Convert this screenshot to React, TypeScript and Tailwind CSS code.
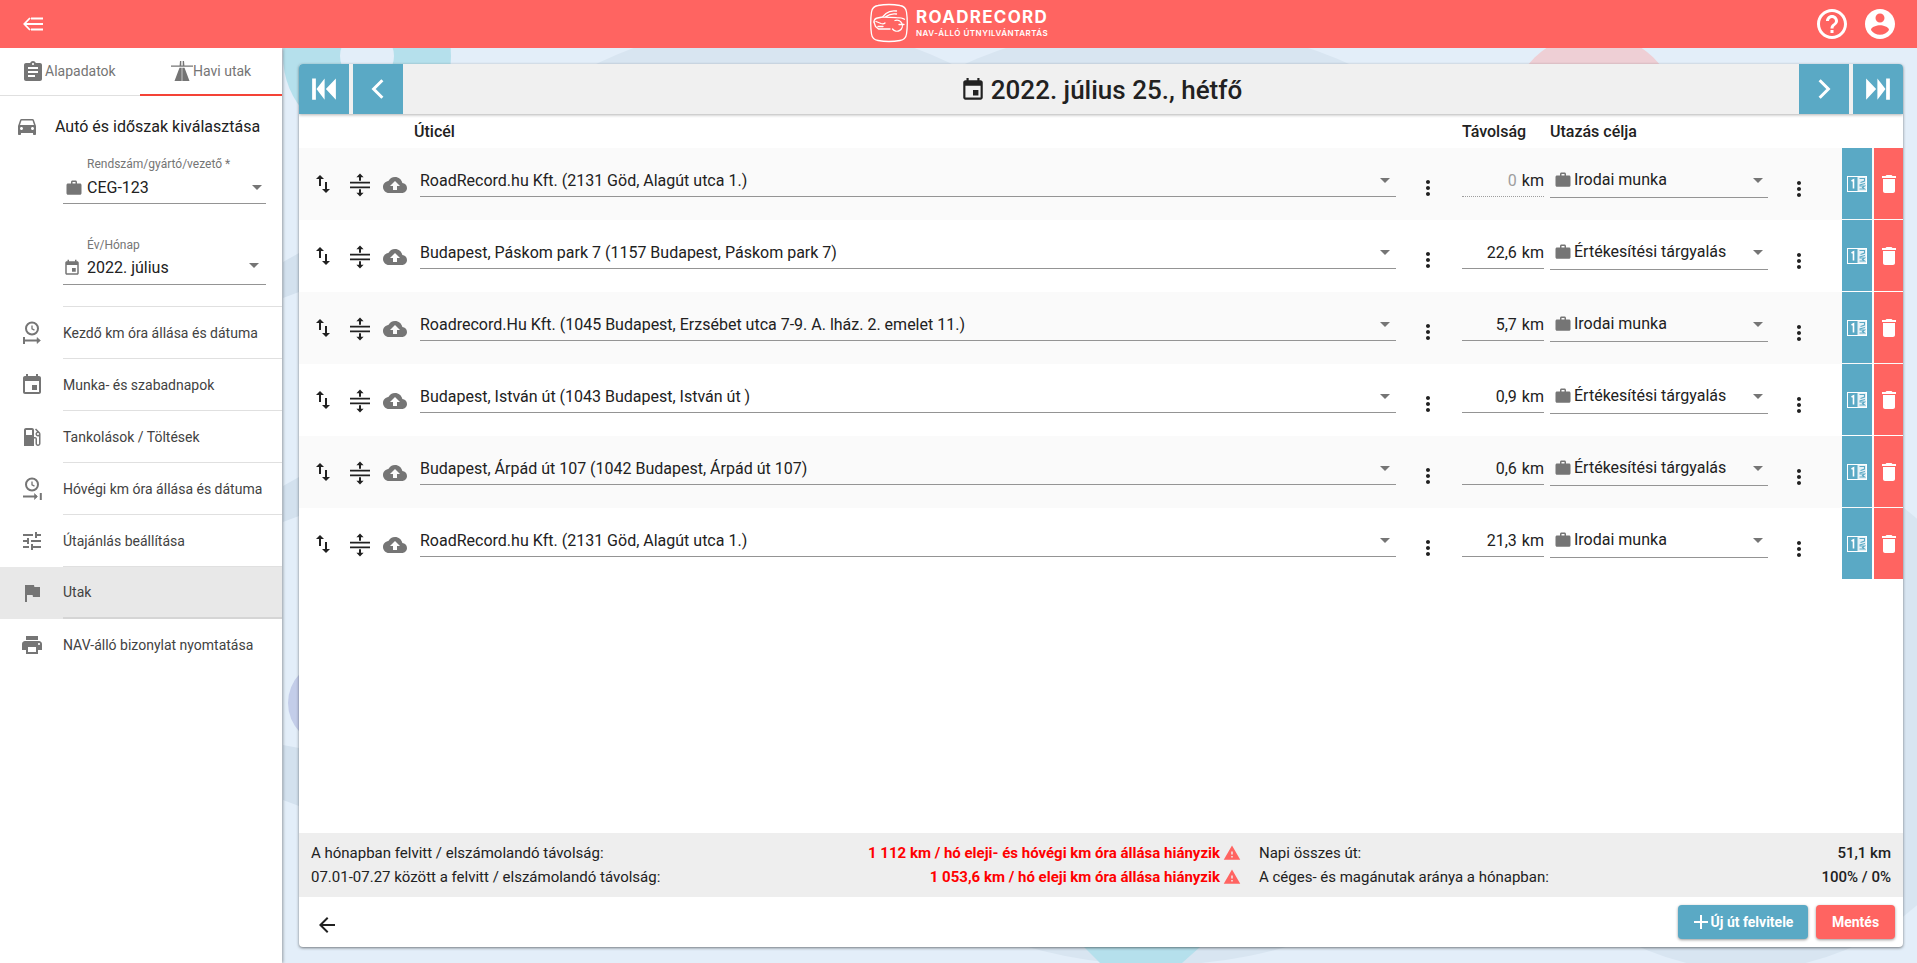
import React from "react";

const P = {
  assignment: "M19 3h-4.18C14.4 1.84 13.3 1 12 1c-1.3 0-2.4.84-2.82 2H5c-1.1 0-2 .9-2 2v14c0 1.1.9 2 2 2h14c1.1 0 2-.9 2-2V5c0-1.1-.9-2-2-2zm-7 0c.55 0 1 .45 1 1s-.45 1-1 1-1-.45-1-1 .45-1 1-1zm2 14H7v-2h7v2zm3-4H7v-2h10v2zm0-4H7V7h10v2z",
  car: "M18.92 6.01C18.72 5.42 18.16 5 17.5 5h-11c-.66 0-1.21.42-1.42 1.01L3 12v8c0 .55.45 1 1 1h1c.55 0 1-.45 1-1v-1h12v1c0 .55.45 1 1 1h1c.55 0 1-.45 1-1v-8l-2.08-5.99zM6.5 16c-.83 0-1.5-.67-1.5-1.5S5.67 13 6.5 13s1.5.67 1.5 1.5S7.33 16 6.5 16zm11 0c-.83 0-1.5-.67-1.5-1.5s.67-1.5 1.5-1.5 1.5.67 1.5 1.5-.67 1.5-1.5 1.5zM5 11l1.5-4.5h11L19 11H5z",
  work: "M20 6h-4V4c0-1.11-.89-2-2-2h-4c-1.11 0-2 .89-2 2v2H4c-1.11 0-1.99.89-1.99 2L2 19c0 1.11.89 2 2 2h16c1.11 0 2-.89 2-2V8c0-1.11-.89-2-2-2zm-6 0h-4V4h4v2z",
  event: "M17 12h-5v5h5v-5zM16 1v2H8V1H6v2H5c-1.11 0-1.99.9-1.99 2L3 19c0 1.1.89 2 2 2h14c1.1 0 2-.9 2-2V5c0-1.1-.9-2-2-2h-1V1h-2zm3 18H5V8h14v11z",
  gas: "M19.77 7.23l.01-.01-3.72-3.72L15 4.56l2.11 2.11c-.94.36-1.61 1.26-1.61 2.33 0 1.38 1.12 2.5 2.5 2.5.36 0 .69-.08 1-.21v7.21c0 .55-.45 1-1 1s-1-.45-1-1V14c0-1.1-.9-2-2-2h-1V5c0-1.1-.9-2-2-2H6c-1.1 0-2 .9-2 2v16h10v-7.5h1.5v5c0 1.38 1.12 2.5 2.5 2.5s2.5-1.12 2.5-2.5V9c0-.69-.28-1.32-.73-1.77zM12 10H6V5h6v5zm6 0c-.55 0-1-.45-1-1s.45-1 1-1 1 .45 1 1-.45 1-1 1z",
  tune: "M3 17v2h6v-2H3zM3 5v2h10V5H3zm10 16v-2h8v-2h-8v-2h-2v6h2zM7 9v2H3v2h4v2h2V9H7zm14 4v-2H11v2h10zm-6-4h2V7h4V5h-4V3h-2v6z",
  flag: "M14.4 6L14 4H5v17h2v-7h5.6l.4 2h7V6z",
  print: "M19 8H5c-1.66 0-3 1.34-3 3v6h4v4h12v-4h4v-6c0-1.66-1.34-3-3-3zm-3 11H8v-5h8v5zm3-7c-.55 0-1-.45-1-1s.45-1 1-1 1 .45 1 1-.45 1-1 1zm-1-9H6v4h12V3z",
  swap: "M16 17.01V10h-2v7.01h-3L15 21l4-3.99h-3zM9 3L5 6.99h3V14h2V6.99h3L9 3z",
  cloud: "M19.35 10.04C18.67 6.59 15.64 4 12 4 9.11 4 6.6 5.64 5.35 8.04 2.34 8.36 0 10.91 0 14c0 3.31 2.69 6 6 6h13c2.76 0 5-2.24 5-5 0-2.64-2.05-4.78-4.65-4.96zM14 13v4h-4v-4H7l5-5 5 5h-3z",
  more: "M12 8c1.1 0 2-.9 2-2s-.9-2-2-2-2 .9-2 2 .9 2 2 2zm0 2c-1.1 0-2 .9-2 2s.9 2 2 2 2-.9 2-2-.9-2-2-2zm0 6c-1.1 0-2 .9-2 2s.9 2 2 2 2-.9 2-2-.9-2-2-2z",
  del: "M6 19c0 1.1.9 2 2 2h8c1.1 0 2-.9 2-2V7H6v12zM19 4h-3.5l-1-1h-5l-1 1H5v2h14V4z",
  warn: "M1 21h22L12 2 1 21zm12-3h-2v-2h2v2zm0-4h-2v-4h2v4z",
  help: "M11 18h2v-2h-2v2zm1-16C6.48 2 2 6.48 2 12s4.48 10 10 10 10-4.48 10-10S17.52 2 12 2zm0 18c-4.41 0-8-3.59-8-8s3.59-8 8-8 8 3.59 8 8-3.59 8-8 8zm0-14c-2.21 0-4 1.79-4 4h2c0-1.1.9-2 2-2s2 .9 2 2c0 2-3 1.75-3 5h2c0-2.25 3-2.5 3-5 0-2.21-1.79-4-4-4z",
  account: "M12 2C6.48 2 2 6.48 2 12s4.48 10 10 10 10-4.48 10-10S17.52 2 12 2zm0 3c1.66 0 3 1.34 3 3s-1.34 3-3 3-3-1.34-3-3 1.34-3 3-3zm0 14.2c-2.5 0-4.71-1.28-6-3.22.03-1.99 4-3.08 6-3.08 1.99 0 5.97 1.09 6 3.08-1.29 1.94-3.5 3.22-6 3.22z",
  back: "M20 11H7.83l5.59-5.59L12 4l-8 8 8 8 1.41-1.41L7.83 13H20v-2z",
  highway: "M1 6.500h22v1.300H1zM10 2h1.300v4.500H9.600zM12.700 2H14l.4 4.500h-1.700zM9.500 8.800h2.200V22H4.500zM12.300 8.800h2.200L19.500 22h-7.200z",
  split: "M2 8.700h20v1.900H2zM2 13.400h20v1.900H2zM12 .5l3.600 3.800h-2.600v3.400h-2V4.300H8.400zM12 23.500l-3.600-3.800h2.600v-3.400h2v3.400h2.600z",
  start: "M2.500 3.500h3v17h-3zM12.500 3.500v17l-6.500-8.500zM21.500 3.500v17l-8-8.500z",
  end: "M21.500 3.500h-3v17h3zM11.500 3.500v17l6.500-8.500zM2.500 3.500v17l8-8.500z",
};

function Icon({ d, className }: { d: string; className: string }) {
  return (
    <svg viewBox="0 0 24 24" className={className} fill="currentColor">
      <path d={d} />
    </svg>
  );
}

function Caret({ className = "" }: { className?: string }) {
  return (
    <svg viewBox="0 0 10 5" className={`w-[10px] h-[5px] shrink-0 ${className}`} fill="#757575">
      <path d="M0 0h10L5 5z" />
    </svg>
  );
}

function ClockIcon({ end }: { end?: boolean }) {
  return (
    <svg viewBox="0 0 20 24" className="w-[20px] h-[24px]" fill="none" stroke="#757575" strokeWidth="2">
      <circle cx="10" cy="7.500" r="6" />
      <path d="M10 4.500v3.300l2.500 1.300" strokeWidth="1.300" />
      {end ? (
        <>
          <path d="M1 19.500h14" />
          <path d="M12.500 16.500l3 3-3 3z" fill="#757575" strokeWidth="0.500" />
          <path d="M18.800 16v7" />
        </>
      ) : (
        <>
          <path d="M2 16v7" />
          <path d="M2 19.500h15" />
          <path d="M15 16.500l3.500 3-3.500 3z" fill="#757575" strokeWidth="0.500" />
        </>
      )}
    </svg>
  );
}

function NumbersIcon() {
  return (
    <svg viewBox="0 0 20 16" className="w-[20px] h-[16px]">
      <rect x="0.500" y="0.500" width="19" height="15" fill="none" stroke="#fff" />
      <rect x="10.500" y="0.500" width="9" height="15" fill="#fff" fillOpacity="0.85" />
      <path d="M4.500 5l2-1.200V12.500" fill="none" stroke="#fff" strokeWidth="1.600" />
      <path d="M12.500 2.500h5v2.500l-4 1.500M18 7.500l-5.500 1.500M12.500 10h5l-2 1.500 2 1.500h-5" fill="none" stroke="#5aa9c5" strokeWidth="1.100" />
    </svg>
  );
}

function Logo() {
  return (
    <svg viewBox="0 0 40 40" className="w-[40px] h-[40px]" fill="none" stroke="#fff" strokeWidth="1.300" strokeLinecap="round" strokeLinejoin="round">
      <path d="M9 2.500C16 1.200 24 1.200 31 2.500c4 .6 6 2.700 6.500 6.500 1 7 1 15 0 22-.5 3.800-2.500 5.900-6.500 6.500-7 1.300-15 1.300-22 0-4-.6-6-2.700-6.500-6.500-1-7-1-15 0-22C3 5.200 5 3.100 9 2.500z" />
      <path d="M5 19c0-2 1-3.500 3.500-4l5-1 3.500-3.500c3-2.500 7-3 10.500-2.500" />
      <path d="M17 13.500c3-2.200 7-3 10.500-2.500M14 14.200l13.500 0.500c3 0 6 .3 8 1.500" />
      <path d="M5 19l1.500 4.500 3 2.500h11.500" />
      <path d="M7 18.500l5 2c1.500.5 3 .5 4-.5M9 23.500h5" />
      <path d="M26 17.500a5.500 5.500 0 1 1-2.500 8.500M30 21.500h5" />
    </svg>
  );
}

const menu: { label: string; icon: React.ReactNode; active?: boolean }[] = [
  { label: "Kezdő km óra állása és dátuma", icon: <ClockIcon /> },
  { label: "Munka- és szabadnapok", icon: <Icon d={P.event} className="w-[24px] h-[24px]" /> },
  { label: "Tankolások / Töltések", icon: <Icon d={P.gas} className="w-[24px] h-[24px]" /> },
  { label: "Hóvégi km óra állása és dátuma", icon: <ClockIcon end /> },
  { label: "Útajánlás beállítása", icon: <Icon d={P.tune} className="w-[24px] h-[24px]" /> },
  { label: "Utak", icon: <Icon d={P.flag} className="w-[24px] h-[24px]" />, active: true },
  { label: "NAV-álló bizonylat nyomtatása", icon: <Icon d={P.print} className="w-[24px] h-[24px]" /> },
];

const rows = [
  { place: "RoadRecord.hu Kft. (2131 Göd, Alagút utca 1.)", km: "0", purpose: "Irodai munka", zero: true },
  { place: "Budapest, Páskom park 7 (1157 Budapest, Páskom park 7)", km: "22,6", purpose: "Értékesítési tárgyalás" },
  { place: "Roadrecord.Hu Kft. (1045 Budapest, Erzsébet utca 7-9. A. lház. 2. emelet 11.)", km: "5,7", purpose: "Irodai munka" },
  { place: "Budapest, István út (1043 Budapest, István út )", km: "0,9", purpose: "Értékesítési tárgyalás" },
  { place: "Budapest, Árpád út 107 (1042 Budapest, Árpád út 107)", km: "0,6", purpose: "Értékesítési tárgyalás" },
  { place: "RoadRecord.hu Kft. (2131 Göd, Alagút utca 1.)", km: "21,3", purpose: "Irodai munka" },
];

function NavButton({ d, chevron }: { d?: string; chevron?: string }) {
  return (
    <div className="w-[50px] h-[50px] bg-[#5aa9c5] flex items-center justify-center text-white shrink-0">
      {d ? (
        <Icon d={d} className="w-[30px] h-[30px]" />
      ) : (
        <svg viewBox="0 0 24 24" className="w-[30px] h-[30px]" fill="none" stroke="#fff" strokeWidth="2.400">
          <path d={chevron} />
        </svg>
      )}
    </div>
  );
}

function Backdrop() {
  return (
    <svg className="absolute inset-0 w-full h-full" viewBox="0 0 1917 963">
      <circle cx="367" cy="56" r="84" fill="#b5e0ec" />
      <circle cx="367" cy="56" r="27" fill="#e3eef9" />
      <circle cx="774" cy="430" r="407" fill="#d8e5f1" />
      <circle cx="1594" cy="117" r="84" fill="#eecfd5" />
      <circle cx="1157" cy="494" r="471" fill="#d8e5f1" />
      <circle cx="1746" cy="712" r="258" fill="#d8e5f1" />
      <path d="M1084 947h116l-18 16h-82z" fill="#b5e0ec" />
      <circle cx="330" cy="703" r="42" fill="#c3cde9" />
      <path d="M283 262L299 253V292L283 298z" fill="#d3e1ee" />
      <path d="M283 486L299 477V516L283 522z" fill="#d3e1ee" />
      <path d="M283 745L299 748V806L283 800z" fill="#d3e1ee" />
    </svg>
  );
}

export default function App() {
  return (
    <div className="relative h-[963px] w-[1917px] overflow-hidden bg-[#e3eef9] text-[#212121] font-['Roboto',sans-serif] flex flex-col">
      <Backdrop />

      <header className="relative z-20 h-[48px] shrink-0 bg-[#ff6461] flex items-center justify-between">
        <div className="w-[66px] flex justify-center">
          <svg viewBox="0 0 20 14" className="w-[20px] h-[14px]" fill="none" stroke="#fff" strokeWidth="1.800">
            <path d="M7 1L1.300 7 7 13M1.500 7H20M8 1.500h12M8 12.500h12" />
          </svg>
        </div>
        <div className="absolute left-[869px] top-[3px] flex items-center gap-[7px]">
          <Logo />
          <div className="text-white font-['Inter',sans-serif] leading-none">
            <div className="text-[17px] font-bold tracking-[1.300px]">ROADRECORD</div>
            <div className="text-[8px] font-semibold mt-[3px] tracking-[0.500px] whitespace-nowrap">NAV-ÁLLÓ ÚTNYILVÁNTARTÁS</div>
          </div>
        </div>
        <div className="flex items-center gap-[12px] pr-[19px] text-white">
          <Icon d={P.help} className="w-[36px] h-[36px]" />
          <Icon d={P.account} className="w-[36px] h-[36px]" />
        </div>
      </header>

      <div className="relative z-10 flex flex-1 min-h-0">
        <aside className="w-[282px] shrink-0 bg-white shadow-[1px_0_3px_rgba(0,0,0,0.35)] flex flex-col text-[#757575]">
          <div className="flex h-[48px] text-[14px] border-b border-[#e0e0e0]">
            <div className="w-[140px] h-full flex items-center pl-[21px]">
              <Icon d={P.assignment} className="w-[24px] h-[24px]" />
              <span>Alapadatok</span>
            </div>
            <div className="flex-1 h-[48px] flex items-center pl-[30px] border-b-2 border-[#f44336]">
              <Icon d={P.highway} className="w-[24px] h-[24px] -mr-[1px]" />
              <span>Havi utak</span>
            </div>
          </div>

          <div className="flex items-center h-[24px] pl-[15px] mt-[19px] gap-[16px] text-[#212121]">
            <Icon d={P.car} className="w-[24px] h-[24px] text-[#757575] -translate-y-[1px]" />
            <span className="text-[16px]">Autó és időszak kiválasztása</span>
          </div>

          <div className="ml-[63px] w-[203px] mt-[18px]">
            <div className="pl-[24px] text-[12px] leading-[14px] text-[#757575]">Rendszám/gyártó/vezető *</div>
            <div className="flex items-center h-[33px] pt-[1px] border-b border-[#949494] text-[16px] text-[#212121] pl-[2px] pr-[4px]">
              <Icon d={P.work} className="w-[18px] h-[18px] text-[#757575]" />
              <span className="flex-1 ml-[4px]">CEG-123</span>
              <Caret />
            </div>
          </div>

          <div className="ml-[63px] w-[203px] mt-[34px]">
            <div className="pl-[24px] text-[12px] leading-[14px] text-[#757575]">Év/Hónap</div>
            <div className="flex items-center h-[33px] border-b border-[#949494] text-[16px] text-[#212121] pr-[7px]">
              <Icon d={P.event} className="w-[18px] h-[18px] text-[#757575]" />
              <span className="flex-1 ml-[6px]">2022. július</span>
              <Caret className="-translate-y-[3px]" />
            </div>
          </div>

          <div className="ml-[63px] mt-[21px] border-t border-[#e0e0e0]" />

          {menu.map((m, i) => (
            <div key={m.label} className={`flex h-[52px] ${m.active ? "bg-[#e8e8e8]" : ""}`}>
              <div className="w-[63px] flex items-center justify-center shrink-0">{m.icon}</div>
              <div
                className={`flex-1 flex items-center pt-[1px] text-[14px] text-[#424242] ${
                  i === menu.length - 1 ? "" : m.active ? "border-b-2 border-[#d5d5d5]" : "border-b border-[#e0e0e0]"
                }`}
              >
                {m.label}
              </div>
            </div>
          ))}
        </aside>

        <main className="flex-1 min-w-0 pt-[16px] pb-[16px] pl-[17px] pr-[14px]">
          <div className="h-full rounded-[4px] overflow-hidden bg-white shadow-[0_1px_3px_rgba(0,0,0,0.5)] flex flex-col">
            <div className="relative z-10 h-[50px] shrink-0 bg-[#f0f0f0] shadow-[0_1px_3px_rgba(0,0,0,0.3)] flex items-center justify-between">
              <div className="flex gap-[4px]">
                <NavButton d={P.start} />
                <NavButton chevron="M15.500 5l-7 7 7 7" />
              </div>
              <div className="flex items-center gap-[5px] text-[26px] font-medium text-[#212121] translate-y-[1px]">
                <Icon d={P.event} className="w-[26px] h-[26px]" />
                <span>2022. július 25., hétfő</span>
              </div>
              <div className="flex gap-[4px]">
                <NavButton chevron="M8.500 5l7 7-7 7" />
                <NavButton d={P.end} />
              </div>
            </div>

            <div className="flex h-[34px] pt-[1px] shrink-0 items-center text-[16px] font-medium">
              <div className="w-[115px]" />
              <div className="flex-1">Úticél</div>
              <div className="w-[88px]">Távolság</div>
              <div className="w-[353px]">Utazás célja</div>
            </div>

            <div className="flex-1 min-h-0">
              {rows.map((r, i) => (
                <div key={i} className={`flex h-[72px] ${i % 2 === 0 ? "bg-[#fafafa]" : "bg-white"}`}>
                  <div className="w-[48px] h-[72px] flex items-center justify-center shrink-0">
                    <Icon d={P.swap} className="w-[24px] h-[24px]" />
                  </div>
                  <div className="w-[26px] h-[72px] flex items-center justify-center shrink-0">
                    <Icon d={P.split} className="w-[24px] h-[24px] translate-y-[1px]" />
                  </div>
                  <div className="w-[44px] h-[72px] flex items-center justify-center shrink-0 text-[#757575]">
                    <Icon d={P.cloud} className="w-[24px] h-[24px] translate-y-[1px]" />
                  </div>
                  <div className="ml-[3px] flex-1 min-w-0">
                    <div className="mt-[16px] h-[33px] pt-[2px] flex items-center border-b border-[#949494] text-[16px] pr-[6px]">
                      <span className="flex-1 truncate">{r.place}</span>
                      <Caret className="-translate-y-[1px]" />
                    </div>
                  </div>
                  <div className="w-[64px] shrink-0 flex justify-center pt-[28px]">
                    <Icon d={P.more} className="w-[24px] h-[24px]" />
                  </div>
                  <div className="ml-[2px] w-[82px] shrink-0">
                    <div
                      className={`mt-[16px] h-[33px] pt-[2px] flex items-center justify-end gap-[5px] text-[16px] border-b ${
                        r.zero ? "border-dotted border-[#9e9e9e]" : "border-[#949494]"
                      }`}
                    >
                      <span className={r.zero ? "text-[#9e9e9e]" : ""}>{r.km}</span>
                      <span>km</span>
                    </div>
                  </div>
                  <div className="ml-[6px] w-[218px] shrink-0">
                    <div className="mt-[16px] h-[34px] pt-[1px] flex items-center border-b border-[#949494] text-[16px] pl-[4px] pr-[5px]">
                      <Icon d={P.work} className="w-[18px] h-[18px] text-[#757575] -translate-y-[1px]" />
                      <span className="flex-1 ml-[2px] -translate-y-[1px]">{r.purpose}</span>
                      <Caret className="-translate-y-[1px]" />
                    </div>
                  </div>
                  <div className="w-[62px] shrink-0 flex justify-center pt-[29px]">
                    <Icon d={P.more} className="w-[24px] h-[24px]" />
                  </div>
                  <div className="ml-[12px] w-[30px] h-[71px] shrink-0 bg-[#5aa9c5] flex items-center justify-center">
                    <NumbersIcon />
                  </div>
                  <div className="ml-[2px] w-[29px] h-[71px] shrink-0 bg-[#ff6461] flex items-center justify-center text-white">
                    <Icon d={P.del} className="w-[24px] h-[24px]" />
                  </div>
                </div>
              ))}
            </div>

            <div className="shrink-0 bg-[#eeeeee] h-[64px] py-[8px] px-[12px] grid grid-cols-[930px_1fr] gap-x-[18px] text-[15px] leading-[24px]">
              <div className="flex justify-between">
                <span>A hónapban felvitt / elszámolandó távolság:</span>
                <span className="flex items-center gap-[3px] font-bold text-[#ff0000]">
                  1 112 km / hó eleji- és hóvégi km óra állása hiányzik
                  <Icon d={P.warn} className="w-[18px] h-[18px] text-[#ff6461]" />
                </span>
              </div>
              <div className="flex justify-between">
                <span>Napi összes út:</span>
                <span className="font-medium">51,1 km</span>
              </div>
              <div className="flex justify-between">
                <span>07.01-07.27 között a felvitt / elszámolandó távolság:</span>
                <span className="flex items-center gap-[3px] font-bold text-[#ff0000]">
                  1 053,6 km / hó eleji km óra állása hiányzik
                  <Icon d={P.warn} className="w-[18px] h-[18px] text-[#ff6461]" />
                </span>
              </div>
              <div className="flex justify-between">
                <span>A céges- és magánutak aránya a hónapban:</span>
                <span className="font-medium">100% / 0%</span>
              </div>
            </div>

            <div className="shrink-0 h-[50px] flex items-center justify-between pl-[16px] pr-[8px]">
              <Icon d={P.back} className="w-[24px] h-[24px] translate-y-[3px]" />
              <div className="flex items-center gap-[8px]">
                <button className="h-[34px] w-[130px] rounded-[4px] bg-[#5aa9c5] text-white text-[14px] font-bold flex items-center justify-center gap-[2px] shadow-[0_1px_3px_rgba(0,0,0,0.4)]">
                  <svg viewBox="0 0 16 16" className="w-[16px] h-[16px]" fill="#fff">
                    <path d="M7 1h2v6h6v2H9v6H7V9H1V7h6z" />
                  </svg>
                  Új út felvitele
                </button>
                <button className="h-[34px] w-[79px] rounded-[4px] bg-[#ff6461] text-white text-[14px] font-bold flex items-center justify-center shadow-[0_1px_3px_rgba(0,0,0,0.4)]">
                  Mentés
                </button>
              </div>
            </div>
          </div>
        </main>
      </div>
    </div>
  );
}
